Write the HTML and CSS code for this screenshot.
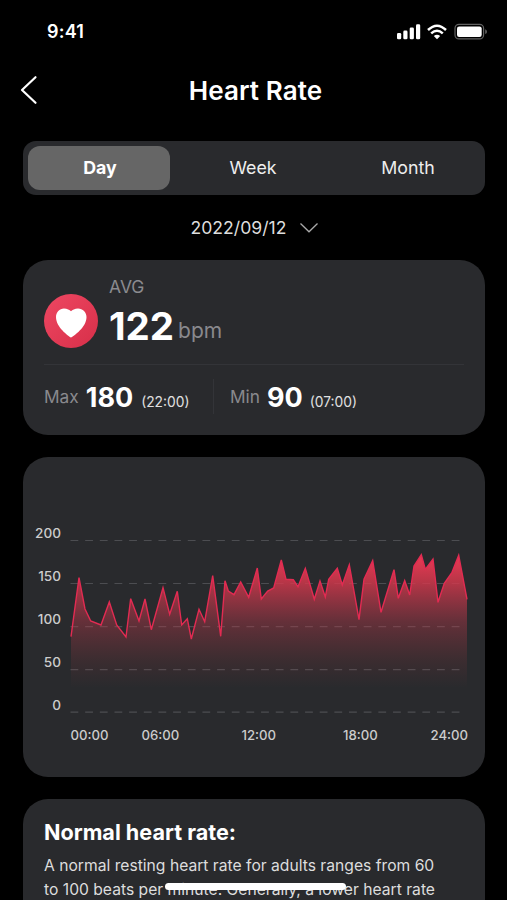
FILE: index.html
```html
<!DOCTYPE html>
<html lang="en">
<head>
<meta charset="utf-8">
<title>Heart Rate</title>
<link rel="stylesheet" href="styles.css">
</head>
<body>
<div class="screen">
  <div class="status">
    <span class="time">9:41</span>
    <svg class="status-icons" width="92" height="18" viewBox="396 22 92 18">
      <g fill="#fff">
        <rect x="397" y="33" width="4.2" height="6.2" rx="1.3"/>
        <rect x="403.3" y="30.6" width="4.2" height="8.6" rx="1.3"/>
        <rect x="409.7" y="27.4" width="4.2" height="11.8" rx="1.3"/>
        <rect x="416" y="24.2" width="4.2" height="15" rx="1.3"/>
        <path d="M433.8 36.1Q437 33.6 440.2 36.1L437 39.2Z"/>
      </g>
      <g fill="none" stroke="#fff" stroke-width="2.5">
        <path d="M428 30Q437 21.4 446 30"/>
        <path d="M431.2 33.4Q437 28 442.8 33.4"/>
      </g>
      <rect x="455" y="24.3" width="28.6" height="14.6" rx="4" fill="none" stroke="#626262" stroke-width="1.2"/>
      <rect x="457" y="26.4" width="24.7" height="10.6" rx="2.2" fill="#fff"/>
      <path d="M485.2 29.3Q487 30 487 31.7T485.2 34Z" fill="#626262"/>
    </svg>
  </div>

  <header class="header">
    <svg class="back" width="18" height="30" viewBox="0 0 18 30"><path d="M15.5 2.2L2 15L15.5 27.8" fill="none" stroke="#fff" stroke-width="2.2" stroke-linecap="round" stroke-linejoin="round"/></svg>
    <h1>Heart Rate</h1>
  </header>

  <nav class="tabs">
    <span class="tab active">Day</span>
    <span class="tab week">Week</span>
    <span class="tab month">Month</span>
  </nav>

  <div class="date">
    <span>2022/09/12</span>
    <svg width="20" height="12" viewBox="0 0 20 12"><path d="M1.5 1.5L10 9.8L18.5 1.5" fill="none" stroke="#aaa" stroke-width="1.3"/></svg>
  </div>

  <section class="card summary">
    <div class="average">
      <svg class="heart" width="54" height="54" viewBox="0 0 54 54">
        <defs><linearGradient id="badge" x1="0" y1="0" x2="1" y2="1"><stop offset="0" stop-color="#ee4762"/><stop offset="1" stop-color="#d72f49"/></linearGradient></defs>
        <circle cx="27" cy="27" r="27" fill="url(#badge)"/>
        <path d="M27 43.6C24.5 42 12 33.4 12 23C12 18 15.500 14.400 20 14.400C23.200 14.400 25.700 15.800 27 17.300C28.300 15.800 30.800 14.400 34 14.400C38.800 14.400 42.500 18 42.500 23C42.500 33.400 29.700 42 27 43.600Z" fill="#fff"/>
      </svg>
      <div>
        <div class="avg-label">AVG</div>
        <div class="avg-value"><b>122</b><span>bpm</span></div>
      </div>
    </div>
    <div class="extremes">
      <div class="stat max"><span class="name">Max</span><b>180</b><small>(22:00)</small></div>
      <div class="stat min"><span class="name">Min</span><b>90</b><small>(07:00)</small></div>
    </div>
  </section>

  <section class="card chart">
    <div class="plot">
      <div class="y-axis"><span>200</span><span>150</span><span>100</span><span>50</span><span>0</span></div>
      <svg width="400" height="182" viewBox="70 535 400 182">
        <defs><linearGradient id="area" gradientUnits="userSpaceOnUse" x1="0" y1="555" x2="0" y2="688">
          <stop offset="0" stop-color="#ed3a54"/><stop offset=".2" stop-color="#d8384d" stop-opacity=".82"/><stop offset=".5" stop-color="#b8384a" stop-opacity=".42"/><stop offset=".8" stop-color="#a03a42" stop-opacity=".15"/><stop offset="1" stop-color="#a03a42" stop-opacity="0"/>
        </linearGradient></defs>
        <path d="M70.500 540.500H460M70.500 583.500H460M70.500 626.700H460M70.500 669.600H460M70.500 712.200H460" fill="none" stroke="#a0a0a4" stroke-opacity=".3" stroke-width="1.200" stroke-dasharray="7.800 6.860"/>
        <path fill="url(#area)" d="M71 636.7L79 577.700 85 609 90.700 621 101 625 109.300 602 116.700 625 126 637 130.700 598.700 139 621 145 599 151.300 629.700 163 587.700 169.700 614.300 177.300 591.300 181.700 625 187.300 618.700 191.300 639 199 609.300 204.700 621.700 212.700 575.700 220.700 636.300 225 580.700 228.300 591 234 594.700 240.700 582 248.700 597.300 257.300 568 261.300 599 267.700 591 273.700 588 281.300 560 286 579.300 293.300 579.700 298 586.700 305.300 568.300 314.300 599.300 320 581 325.300 597 328.700 579.300 337.300 568.300 342.300 585 349.300 564.700 359 619.700 364 579.300 372.700 560.700 381 612.300 394 569.700 398.300 598.300 404.700 580.700 409.700 595 414 566 421.300 554.700 425.300 569.300 433 559 438 602.300 444.300 583.300 452 572.300 458.700 555.300 467 599.300V690H71Z"/>
        <path fill="none" stroke="#e22b52" stroke-width="1.4" d="M71 636.7L79 577.700 85 609 90.700 621 101 625 109.300 602 116.700 625 126 637 130.700 598.700 139 621 145 599 151.300 629.700 163 587.700 169.700 614.300 177.300 591.300 181.700 625 187.300 618.700 191.300 639 199 609.300 204.700 621.700 212.700 575.700 220.700 636.300 225 580.700 228.300 591 234 594.700 240.700 582 248.700 597.300 257.300 568 261.300 599 267.700 591 273.700 588 281.300 560 286 579.300 293.300 579.700 298 586.700 305.300 568.300 314.300 599.300 320 581 325.300 597 328.700 579.300 337.300 568.300 342.300 585 349.300 564.700 359 619.700 364 579.300 372.700 560.700 381 612.300 394 569.700 398.300 598.300 404.700 580.700 409.700 595 414 566 421.300 554.700 425.300 569.300 433 559 438 602.300 444.300 583.300 452 572.300 458.700 555.300 467 599.300"/>
      </svg>
    </div>
    <div class="x-axis"><span>00:00</span><span>06:00</span><span>12:00</span><span>18:00</span><span>24:00</span></div>
  </section>

  <section class="card info">
    <h2>Normal heart rate:</h2>
    <p>A normal resting heart rate for adults ranges from 60<br>to 100 beats per minute. Generally, a lower heart rate</p>
  </section>
  <div class="home-indicator"></div>
</div>
</body>
</html>
```
FILE: styles.css
```css
* { box-sizing: border-box; }
body {
  margin: 0;
  background: #000;
  color: #fff;
  font-family: Inter, "Liberation Sans", sans-serif;
}
.screen {
  position: relative;
  width: 507px;
  height: 900px;
  padding: 0 22px 0 23px;
  overflow: hidden;
}
.status {
  display: flex;
  justify-content: space-between;
  height: 62px;
  padding: 22px 0 0 24px;
  margin-right: -3px;
}
.time { font-size: 18px; font-weight: 600; line-height: 20px; letter-spacing: .2px; }
.header {
  display: grid;
  grid-template-columns: 18px 1fr 18px;
  height: 79px;
  padding-top: 13px;
}
.back { margin-left: -3px; }
h1 {
  margin: 0;
  padding: 0 0 0 3px;
  font-size: 26px;
  font-weight: 600;
  line-height: 31px;
  letter-spacing: .1px;
  text-align: center;
}
.tabs {
  display: grid;
  grid-template-columns: 142px 1fr 144px;
  height: 54px;
  padding: 5px;
  border-radius: 13px;
  background: #292a2d;
  font-size: 17.8px;
  line-height: 44px;
  text-align: center;
}
.tab { color: #eee; }
.tab.active { border-radius: 12px; background: #666; color: #fff; font-weight: 700; height: 44px; padding-left: 2px; }
.date {
  display: flex;
  align-items: center;
  gap: 13px;
  height: 65px;
  padding: 0 0 1px 167.5px;
  color: #dedede;
  font-size: 17.6px;
}
.date svg { position: relative; top: 1px; }
.card { background: #292a2d; border-radius: 25px; }
.summary { height: 175px; padding: 16px 21px 0; }
.average { display: flex; height: 89px; border-bottom: 1px solid #333438; }
.heart { margin: 18px 11px 0 0; }
.avg-label { color: #8b8b8f; font-size: 17.5px; line-height: 22px; }
.avg-value { display: flex; align-items: baseline; gap: 4px; line-height: 50px; margin-top: 3px; }
.avg-value b { font-size: 38.5px; }
.avg-value span { color: #89898d; font-size: 21px; transform: translateY(-2px); }
.extremes { display: flex; padding-top: 14px; }
.stat { display: flex; align-items: baseline; height: 35px; line-height: 37px; }
.stat .name { color: #89898d; font-size: 17.3px; transform: translateY(-4px); }
.stat b { font-size: 27px; margin-left: 7px; }
.stat small { color: #e0e0e0; font-size: 13.8px; margin-left: 8px; }
.max { width: 170px; border-right: 1px solid #333438; }
.min { padding-left: 16px; }
.min small { margin-left: 7px; }
.chart { height: 320px; margin-top: 22px; padding-top: 66px; }
.plot { display: flex; height: 194px; }
.plot svg { flex: none; margin-top: 12px; }
.y-axis { width: 47px; padding-right: 9px; text-align: right; color: #ccc; font-size: 13.6px; font-weight: 500; line-height: 20px; display: flex; flex-direction: column; gap: 22.9px; }
.x-axis { display: grid; grid-template-columns: 71px 100px 101.500px 87.500px auto; padding: 8px 0 0 47.500px; color: #ccc; font-size: 13.200px; font-weight: 500; line-height: 20px; }
.info { height: 150px; margin-top: 22px; padding: 20px 21px; }
h2 { margin: 0; font-size: 21.6px; line-height: 27px; }
p { margin: 8px 0 0; color: #ddd; font-size: 15.67px; line-height: 24px; white-space: nowrap; }
.home-indicator { position: absolute; left: 165px; top: 883px; width: 181px; height: 7px; border-radius: 4px; background: #fff; }
```
